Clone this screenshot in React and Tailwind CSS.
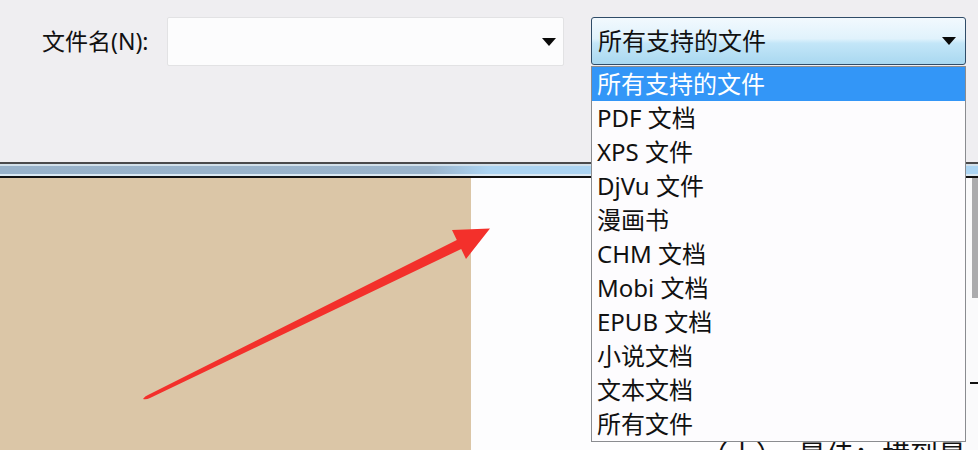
import { useState } from "react";

const FILE_TYPES = [
  "所有支持的文件",
  "PDF 文档",
  "XPS 文件",
  "DjVu 文件",
  "漫画书",
  "CHM 文档",
  "Mobi 文档",
  "EPUB 文档",
  "小说文档",
  "文本文档",
  "所有文件",
];

const Caret = () => (
  <svg width="14" height="8" viewBox="0 0 14 8" className="shrink-0">
    <path d="M0 0 H14 L7 8 Z" fill="#0a0a0a" />
  </svg>
);

const App = () => {
  const [selected] = useState(0);

  return (
    <div
      className="relative w-[978px] h-[450px] overflow-hidden bg-[#efeef1] text-[#111]"
      style={{ fontFamily: "'Noto Sans', 'Noto Sans CJK SC', sans-serif" }}
    >
      {/* file name row */}
      <div className="h-[162px] flex items-start pt-[17px] pl-[42px]">
        <div className="w-[125px] h-[49px] flex items-center text-[23px] leading-none whitespace-nowrap">文件名(N):</div>
        <div className="w-[397px] h-[49px] bg-[#fcfcfd] border border-[#e2e2e4] rounded-[2px] flex items-center justify-end pr-[7px]">
          <Caret />
        </div>
        <div className="ml-[27px] w-[375px] h-[48px] rounded-[3px] border border-[#2f4c68] bg-[linear-gradient(to_bottom,#f2f9fe_0%,#e0f2fc_45%,#c3e6f8_55%,#a9d8f0_100%)] flex items-center justify-between pl-[6px] pr-[9px]">
          <span className="text-[24px] leading-none">{FILE_TYPES[selected]}</span>
          <Caret />
        </div>
      </div>

      {/* splitter band */}
      <div className="h-[16px] flex flex-col">
        <div className="h-[2px] bg-[#4a4a4c]" />
        <div className="h-[2px] bg-[#d2e0ea]" />
        <div className="h-[8px] bg-[linear-gradient(to_right,#98b2ca_0%,#9ab4cc_44%,#acd4f2_50%,#acd5f3_100%)]" />
        <div className="h-[2px] bg-[#dbe9f3]" />
        <div className="h-[2px] bg-[#111]" />
      </div>

      {/* preview area */}
      <div className="h-[272px] flex">
        <div className="w-[471px] shrink-0 bg-[#dbc6a7]" />
        <div className="flex-1 min-w-0 overflow-hidden bg-[#fdfdfe] flex flex-col justify-end pl-[229px]">
          <div className="text-[28px] leading-none whitespace-nowrap -mb-[19px]">（十）、最佳：横到最</div>
        </div>
        <div className="w-[13px] shrink-0 bg-[#fafafb] flex flex-col">
          <div className="ml-[7px] w-[6px] h-[120px] bg-[#ababad]" />
          <div className="mt-[84px] ml-[5px] w-[8px] h-[2px] bg-[#111]" />
        </div>
      </div>

      {/* open dropdown list */}
      <ul className="absolute left-[591px] top-[66px] w-[375px] h-[376px] bg-[#fdfcfe] border border-[#8a8c90] text-[24px] leading-none">
        {FILE_TYPES.map((t, i) => (
          <li
            key={t}
            className={`h-[34px] flex items-center pl-[5px] whitespace-nowrap ${
              i === selected ? "bg-[#3396f7] text-white" : ""
            }`}
          >
            {t}
          </li>
        ))}
      </ul>

      {/* red annotation arrow */}
      <svg className="absolute left-0 top-0 pointer-events-none" width="978" height="450">
        <path
          d="M143 399 Q145 396 148 395 L456.8 240 L452 230 L490 228.5 L466 259 L461.2 249 L150 398 Q146 400 143 399 Z"
          fill="#f3302b"
        />
      </svg>
    </div>
  );
};

export default App;
